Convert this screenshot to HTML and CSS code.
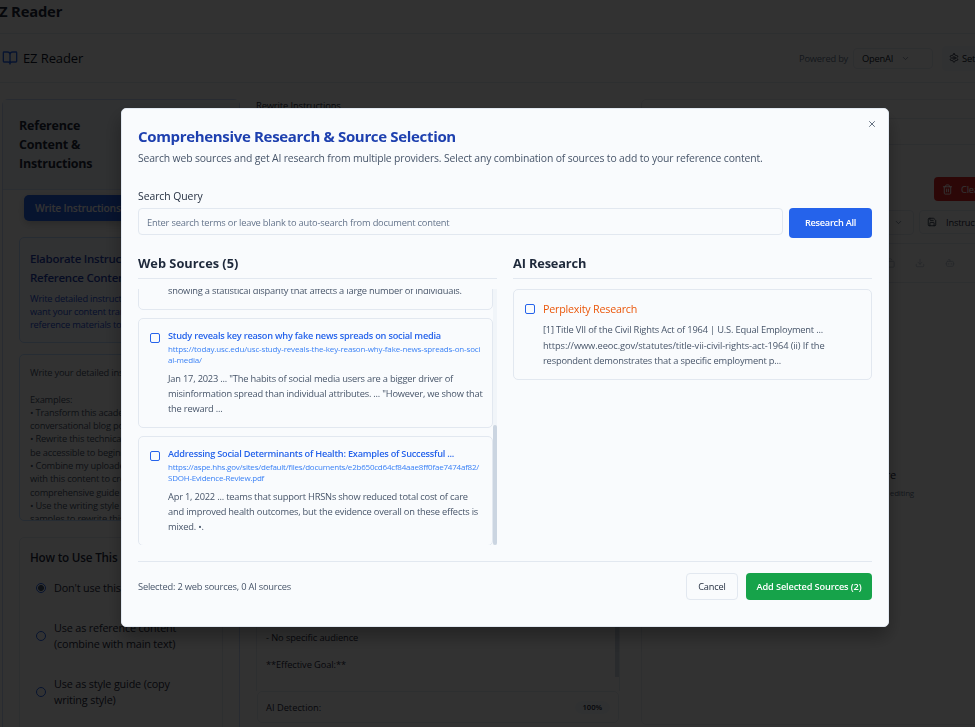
FILE: index.html
```html
<!DOCTYPE html>
<html lang="en">
<head>
<meta charset="utf-8">
<title>EZ Reader</title>
<link rel="stylesheet" href="styles.css">
</head>
<body>
<div class="app">
  <header class="topbar"><b>EZ Reader</b></header>
  <header class="navbar">
    <svg class="logo" viewBox="0 0 24 24"><path d="M12 7v14M3 18a1 1 0 0 1-1-1V4a1 1 0 0 1 1-1h5a4 4 0 0 1 4 4 4 4 0 0 1 4-4h5a1 1 0 0 1 1 1v13a1 1 0 0 1-1 1h-6a3 3 0 0 0-3 3 3 3 0 0 0-3-3z"/></svg>
    <span class="brand">EZ Reader</span>
    <span class="powered">Powered by</span>
    <span class="provider">OpenAI <svg class="chev" viewBox="0 0 24 24"><path d="m6 9 6 6 6-6"/></svg></span>
    <span class="settings"><svg viewBox="0 0 24 24"><path d="M12.2 2h-.4a2 2 0 0 0-2 2v.2a2 2 0 0 1-1 1.7l-.4.3a2 2 0 0 1-2 0l-.2-.1a2 2 0 0 0-2.7.7l-.2.4a2 2 0 0 0 .7 2.7l.2.1a2 2 0 0 1 1 1.7v.5a2 2 0 0 1-1 1.8l-.2.1a2 2 0 0 0-.7 2.7l.2.4a2 2 0 0 0 2.7.7l.2-.1a2 2 0 0 1 2 0l.4.3a2 2 0 0 1 1 1.7v.2a2 2 0 0 0 2 2h.4a2 2 0 0 0 2-2v-.2a2 2 0 0 1 1-1.7l.4-.3a2 2 0 0 1 2 0l.2.1a2 2 0 0 0 2.7-.7l.2-.4a2 2 0 0 0-.7-2.7l-.2-.1a2 2 0 0 1-1-1.8v-.5a2 2 0 0 1 1-1.7l.2-.1a2 2 0 0 0 .7-2.7l-.2-.4a2 2 0 0 0-2.7-.7l-.2.1a2 2 0 0 1-2 0l-.4-.3a2 2 0 0 1-1-1.7V4a2 2 0 0 0-2-2z"/><circle cx="12" cy="12" r="3"/></svg>Settings</span>
  </header>
  <main class="columns">
    <section class="panel">
      <h2 class="panel-head">Reference<br>Content &amp;<br>Instructions</h2>
      <div class="tabs"><span class="tab">Write Instructions</span></div>
      <div class="intro">
        <h3>Elaborate Instructions for<br>Reference Content</h3>
        <p>Write detailed instructions for how you<br>want your content transformed, using<br>reference materials to guide it</p>
      </div>
      <div class="prompt">Write your detailed instructions here...<br><br>Examples:<br>• Transform this academic text into a<br>conversational blog post<br>• Rewrite this technical content to<br>be accessible to beginners<br>• Combine my uploaded notes<br>with this content to create a<br>comprehensive guide<br>• Use the writing style from my<br>samples to rewrite this text</div>
      <div class="usage">
        <h3>How to Use This</h3>
        <div class="option one"><i class="radio on"></i><span>Don't use this</span></div>
        <div class="option"><i class="radio"></i><span>Use as reference content<br>(combine with main text)</span></div>
        <div class="option"><i class="radio"></i><span>Use as style guide (copy<br>writing style)</span></div>
      </div>
    </section>
    <section class="middle">
      <div class="caption">Rewrite Instructions</div>
      <div class="editor">
        <div class="editor-text">- No timeline<br>- No specific audience<br><br>**Effective Goal:**</div>
        <div class="editor-bar"></div>
      </div>
      <div class="detect"><span>AI Detection:</span><b>100%</b></div>
    </section>
    <section class="right">
      <div class="row-a"></div>
      <div class="row-b"></div>
      <div class="actions"><span class="clear"><svg viewBox="0 0 24 24"><path d="M3 6h18M19 6v14a2 2 0 0 1-2 2H7a2 2 0 0 1-2-2V6M8 6V4a2 2 0 0 1 2-2h4a2 2 0 0 1 2 2v2M10 11v6M14 11v6"/></svg>Clear</span></div>
      <div class="selects">
        <span class="select"><svg class="chev" viewBox="0 0 24 24"><path d="m6 9 6 6 6-6"/></svg></span>
        <span class="save"><svg viewBox="0 0 24 24"><path d="M15.200 3a2 2 0 0 1 1.400.6l3.800 3.800a2 2 0 0 1 .6 1.400V19a2 2 0 0 1-2 2H5a2 2 0 0 1-2-2V5a2 2 0 0 1 2-2zM17 21v-7a1 1 0 0 0-1-1H8a1 1 0 0 0-1 1v7M7 3v4a1 1 0 0 0 1 1h7"/></svg>Instructions</span>
      </div>
      <div class="tools">
        <svg viewBox="0 0 24 24"><rect x="8" y="8" width="14" height="14" rx="2"/><path d="M4 16a2 2 0 0 1-2-2V4c0-1.100.9-2 2-2h10a2 2 0 0 1 2 2"/></svg>
        <svg viewBox="0 0 24 24"><path d="M21 15v4a2 2 0 0 1-2 2H5a2 2 0 0 1-2-2v-4M7 10l5 5 5-5M12 15V3"/></svg>
        <svg viewBox="0 0 24 24"><path d="M12 8V4H8M2 14h2M20 14h2M15 13v2M9 13v2"/><rect x="4" y="8" width="16" height="12" rx="2"/></svg>
        <svg viewBox="0 0 24 24"><path d="m22 2-7 20-4-9-9-4zM22 2 11 13"/></svg>
      </div>
      <div class="empty"><p>Your text will appear here</p><small>Ready for editing</small></div>
    </section>
  </main>
</div>

<div class="backdrop">
  <div class="modal" role="dialog">
    <svg class="close" viewBox="0 0 24 24"><path d="M18 6 6 18M6 6l12 12"/></svg>
    <h1>Comprehensive Research &amp; Source Selection</h1>
    <p class="lead">Search web sources and get AI research from multiple providers. Select any combination of sources to add to your reference content.</p>
    <label>Search Query</label>
    <div class="search">
      <div class="input">Enter search terms or leave blank to auto-search from document content</div>
      <button class="primary">Research All</button>
    </div>
    <div class="results">
      <section>
        <h2>Web Sources (5)</h2>
        <div class="scroll">
          <div class="cards">
            <article class="card first">
              <i class="box"></i>
              <div><h3>&nbsp;</h3><p class="url">&nbsp;<br>&nbsp;</p><p class="text"><br><br>showing a statistical disparity that affects a large number of individuals.</p></div>
            </article>
            <article class="card">
              <i class="box"></i>
              <div><h3>Study reveals key reason why fake news spreads on social media</h3>
              <p class="url">https://today.usc.edu/usc-study-reveals-the-key-reason-why-fake-news-spreads-on-soci<br>al-media/</p>
              <p class="text">Jan 17, 2023 ... "The habits of social media users are a bigger driver of<br>misinformation spread than individual attributes. ... "However, we show that<br>the reward ...</p></div>
            </article>
            <article class="card">
              <i class="box"></i>
              <div><h3>Addressing Social Determinants of Health: Examples of Successful ...</h3>
              <p class="url tight">https://aspe.hhs.gov/sites/default/files/documents/e2b650cd64cf84aae8ff0fae7474af82/<br>SDOH-Evidence-Review.pdf</p>
              <p class="text">Apr 1, 2022 ... teams that support HRSNs show reduced total cost of care<br>and improved health outcomes, but the evidence overall on these effects is<br>mixed. •.</p></div>
            </article>
          </div>
          <div class="track"><div class="thumb"></div></div>
        </div>
      </section>
      <section>
        <h2>AI Research</h2>
        <article class="card ai">
          <i class="box"></i>
          <div><h3>Perplexity Research</h3>
          <p class="text">[1] Title VII of the Civil Rights Act of 1964 | U.S. Equal Employment ...<br><span class="wide">https://www.eeoc.gov/statutes/title-vii-civil-rights-act-1964 (ii) If the</span><br>respondent demonstrates that a specific employment p...</p></div>
        </article>
      </section>
    </div>
    <footer>
      <span class="count">Selected: 2 web sources, 0 AI sources</span>
      <button class="cancel">Cancel</button>
      <button class="add">Add Selected Sources (2)</button>
    </footer>
  </div>
</div>
</body>
</html>
```
FILE: styles.css
```css
* { box-sizing: border-box; margin: 0; padding: 0; }
html, body { height: 100%; overflow: hidden; }
body {
  font: 9.3px/13px "Open Sans", "Noto Sans", sans-serif;
  letter-spacing: -.2px;
  color: #1e293b;
  background: #fbfbfb;
  white-space: nowrap;
}
svg { fill: none; stroke: currentColor; stroke-width: 2; stroke-linecap: round; stroke-linejoin: round; flex: none; }
i { font-style: normal; flex: none; }
button { font-family: inherit; border: 0; }

/* page behind the dialog */
.app { width: 975px; height: 727px; overflow: hidden; display: flex; flex-direction: column; }
.topbar { height: 34px; flex: none; border-bottom: 1px solid #e2e8f0; font-size: 14.800px; line-height: 23px; }
.topbar b { margin-left: -9px; }
.navbar { height: 49px; flex: none; border-bottom: 1px solid #e2e8f0; display: flex; align-items: center; color: #0f172a; }
.navbar > * { flex: none; }
.logo { width: 16px; height: 16px; margin-left: 2px; color: #2563eb; }
.brand { font-size: 13px; margin-left: 5px; width: 776px; font-weight: 500; letter-spacing: -.1px; }
.powered { color: #64748b; width: 54px; }
.provider { width: 80px; height: 21px; border: 1px solid #e2e8f0; border-radius: 4px; padding: 0 8px; display: flex; align-items: center; gap: 8px; }
.chev { width: 9px; height: 9px; color: #64748b; }
.settings { margin-left: 9px; height: 25px; padding: 0 7px; border-radius: 4px; background: #f1f5f9; display: flex; align-items: center; gap: 3px; font-weight: 500; }
.settings svg { width: 10px; height: 10px; }

.columns { flex: 1; display: flex; padding: 16px 0 0 2px; min-height: 0; }
.panel { width: 238px; flex: none; height: 700px; border: 1px solid #c7d7f5; border-radius: 6px 6px 0 0; }
.panel-head { height: 90px; padding: 16px 16px 0; font-size: 12.500px; line-height: 19px; font-weight: 700; background: #eff3fa; border-bottom: 1px solid #d8e3f7; }
.tabs { padding: 5px 21px 0; height: 47px; }
.tab { display: block; width: 140px; height: 26px; padding-left: 11px; line-height: 26px; font-size: 10.300px; font-weight: 600; color: #fff; background: #2563eb; border-radius: 5px; box-shadow: 0 3px 8px #0003; }
.intro { margin: 0 16px; height: 106px; padding: 11px 10px; border: 1px solid #bfdbfe; border-radius: 5px; background: #f5f8fd; overflow: hidden; }
.intro h3 { font-size: 11.500px; line-height: 19px; font-weight: 600; letter-spacing: -.25px; color: #1e3fae; }
.intro p { color: #1d4ed8; margin-top: 5px; }
.prompt { margin: 11px 16px 0; height: 167px; padding: 11px 10px 0; border: 1px solid #bfdbfe; border-radius: 5px; overflow: hidden; line-height: 13.300px; color: #475569; }
.usage { margin: 16px 16px 0; height: 210px; border: 1px solid #e2e8f0; border-radius: 5px; padding: 10px; }
.usage h3 { font-size: 11.700px; line-height: 19px; font-weight: 600; }
.option { display: flex; align-items: center; gap: 8px; padding-left: 6px; height: 56px; font-size: 10.800px; line-height: 16px; letter-spacing: -.15px; }
.option.one { height: 41px; }
.radio { width: 10px; height: 10px; border: 1px solid #2563eb; border-radius: 50%; }
.radio.on { background: radial-gradient(circle, #475569 2.600px, transparent 3.400px); }

.middle { width: 364px; flex: none; margin-left: 16px; letter-spacing: -.1px; }
.caption { line-height: 13px; height: 13px; }
.editor { height: 579px; border: 1px solid #e2e8f0; border-width: 0 1px; display: flex; align-items: flex-end; justify-content: space-between; overflow: hidden; }
.editor-text { padding: 0 0 20px 9px; line-height: 13.400px; }
.editor-bar { width: 4px; height: 250px; margin-bottom: 14px; background: #cbd5e1; }
.detect { height: 32px; border: 1px solid #e2e8f0; border-radius: 5px; margin: 0 1px; padding: 0 8px; display: flex; align-items: center; justify-content: space-between; }
.detect b { font-size: 7.700px; line-height: 13px; font-weight: 600; padding: 0 8px; border-radius: 7px; background: #f1f5f9; }
.detect span { letter-spacing: 0; }

.right { width: 400px; flex: none; margin-left: 21px; height: 626px; border: 1px solid #e6eaf0; border-radius: 5px; display: flex; flex-direction: column; }
.row-a { height: 19px; border-bottom: 1px solid #e2e8f0; }
.row-b { height: 26px; border-bottom: 1px solid #e2e8f0; }
.actions { height: 65px; padding: 32px 0 0 292px; }
.clear { display: flex; align-items: center; gap: 8px; width: 60px; height: 24px; padding-left: 8px; border-radius: 4px; background: #dc2626; color: #fff; font-weight: 500; }
.clear svg { width: 11px; height: 11px; }
.selects { display: flex; gap: 5px; height: 34px; padding-left: 171px; border-bottom: 1px solid #e2e8f0; }
.select { width: 101px; height: 25px; border: 1px solid #e2e8f0; border-radius: 4px; display: flex; justify-content: flex-end; align-items: center; padding-right: 10px; }
.save { width: 90px; height: 24px; border: 1px solid #e2e8f0; border-radius: 4px; display: flex; align-items: center; gap: 9px; padding-left: 7px; font-weight: 500; }
.save svg { width: 10px; height: 10px; }
.tools { height: 39px; display: flex; align-items: center; gap: 20px; padding-left: 243px; color: #b4becc; border-bottom: 1px solid #e2e8f0; }
.tools svg { width: 10px; height: 10px; }
.empty { padding-top: 184px; width: 272px; text-align: right; }
.empty p { font-size: 11px; line-height: 16px; margin-right: 18px; }
.empty small { font-size: 8px; line-height: 19px; display: block; color: #64748b; }

/* dialog */
.backdrop { position: fixed; inset: 0; background: rgba(0, 0, 0, .8); padding: 108px 0 0 121px; }
.modal { position: relative; width: 768px; height: 519px; background: #f9fbfd; border: 1px solid #e2e8f0; border-radius: 5px; padding: 17px 16px 0; box-shadow: 0 10px 20px #0005; }
.close { position: absolute; right: 11px; top: 10px; width: 10px; height: 10px; color: #475569; }
.modal h1 { font-size: 15px; line-height: 20px; font-weight: 700; letter-spacing: -.33px; color: #1e40af; }
.lead { font-size: 10.400px; line-height: 16px; letter-spacing: -.145px; margin-top: 4px; color: #475569; }
.modal label { display: block; font-size: 10.400px; line-height: 16px; font-weight: 500; letter-spacing: -.05px; margin-top: 22px; }
.search { display: flex; gap: 6px; margin-top: 4px; height: 30px; }
.input { flex: 1; height: 27px; line-height: 27px; border: 1px solid #e2e8f0; border-radius: 4px; padding-left: 8px; color: #64748b; }
.primary { width: 83px; height: 30px; padding-bottom: 1px; border-radius: 4px; background: #2563eb; color: #fff; font-size: 9.200px; font-weight: 600; letter-spacing: -.25px; }
.results { display: grid; grid-template-columns: 359px 359px; gap: 16px; margin-top: 15px; height: 292px; }
.results h2 { font-size: 12.800px; line-height: 20px; height: 26px; font-weight: 700; letter-spacing: 0; border-bottom: 1px solid #e2e8f0; margin-bottom: 10px; }
.results section:last-child h2 { letter-spacing: -.15px; }
.scroll { height: 256px; display: flex; overflow: hidden; }
.cards { width: 355px; display: flex; flex-direction: column; gap: 8px; }
.card { height: 110px; flex: none; display: flex; gap: 8px; padding: 9px 11px; border: 1px solid #e2e8f0; border-radius: 5px; }
.card.first { margin-top: -89px; }
.box { width: 10px; height: 10px; margin-top: 5px; border: 1px solid #2563eb; border-radius: 2px; }
.card h3 { font-size: 9.200px; line-height: 15px; font-weight: 600; letter-spacing: -.22px; color: #2563eb; }
.url { font-size: 8px; line-height: 11px; letter-spacing: -.15px; color: #3b82f6; }
.url.tight { letter-spacing: -.215px; }
.text { line-height: 15px; color: #475569; margin-top: 6px; }
.track { width: 4px; background: #f1f5f9; display: flex; flex-direction: column; justify-content: flex-end; }
.thumb { height: 120px; background: #cbd5e1; border-radius: 2px; }
.card.ai { height: 91px; }
.card.ai h3 { font-size: 10.700px; line-height: 18px; font-weight: 500; letter-spacing: -.2px; margin-top: 1px; color: #ea580c; }
.card.ai .text { line-height: 15.700px; margin-top: 4px; letter-spacing: -.18px; }
.wide { letter-spacing: -.1px; }
.modal footer { margin-top: 16px; border-top: 1px solid #e2e8f0; display: flex; align-items: center; gap: 8px; padding-top: 11px; }
.count { flex: 1; color: #475569; }
.cancel, .add { height: 27px; border-radius: 4px; font-size: 9.200px; letter-spacing: -.13px; }
.cancel { width: 52px; border: 1px solid #e2e8f0; background: transparent; color: #1e293b; font-weight: 500; }
.add { width: 126px; background: #16a34a; color: #fff; font-weight: 600; }
```
